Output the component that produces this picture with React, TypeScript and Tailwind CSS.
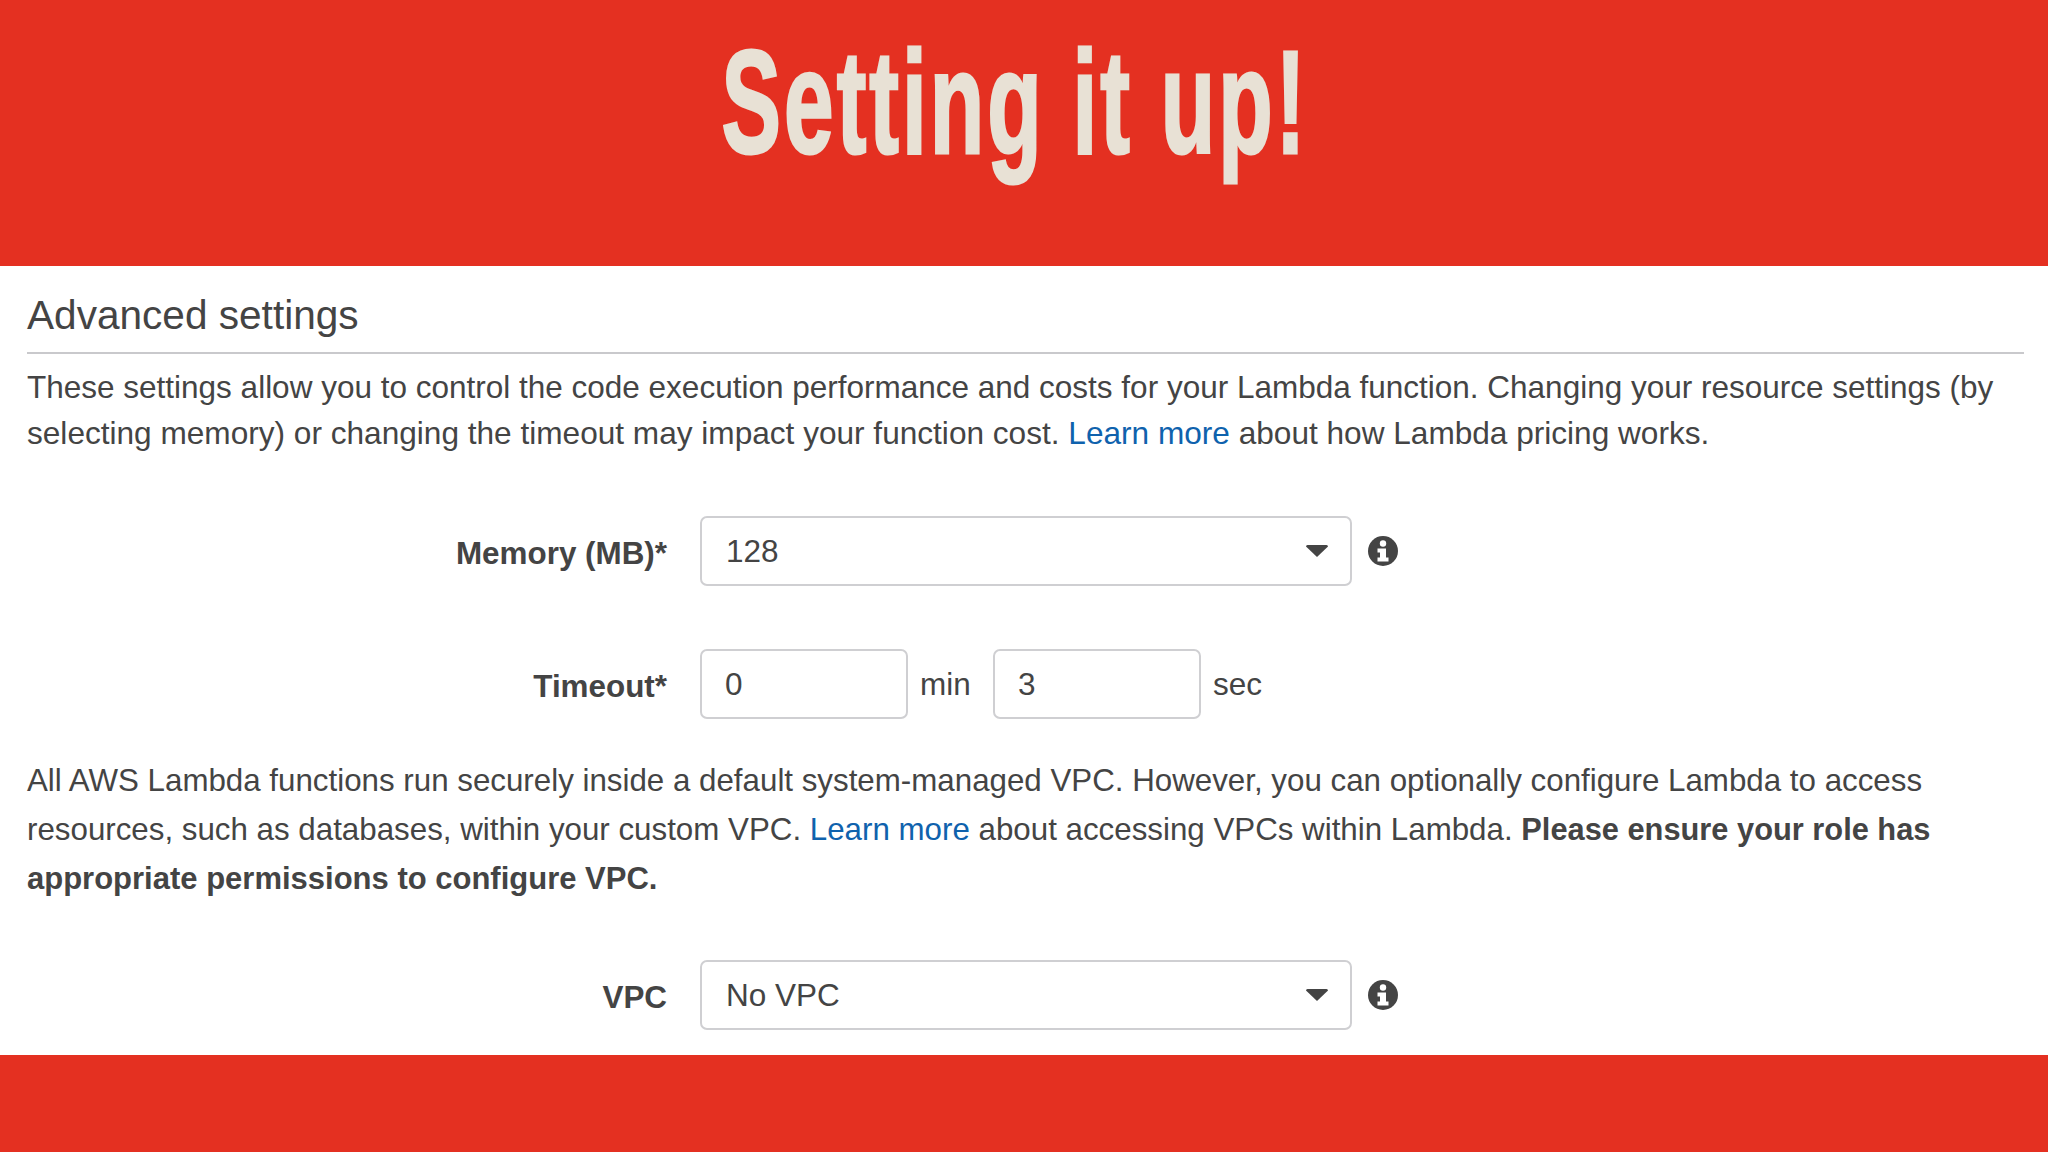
const sans = { fontFamily: '"Liberation Sans", Arial, sans-serif' };

function InfoIcon() {
  return (
    <svg viewBox="0 0 30 30" className="w-[30px] h-[30px] shrink-0 ml-[16px]">
      <circle cx="15" cy="15" r="15" fill="#444444" />
      <circle cx="15" cy="7.500" r="3.200" fill="#ffffff" />
      <path d="M9.500 12.500h8.500v9h2.500v4h-11v-4h2.500v-5h-2.500z" fill="#ffffff" />
    </svg>
  );
}

function Caret() {
  return (
    <svg viewBox="0 0 22 12" className="w-[22px] h-[12px] shrink-0">
      <path d="M0 1.500q0-1.500 1.500-1.500h19q1.500 0 1.500 1.500L11 12z" fill="#444444" />
    </svg>
  );
}

function SelectBox({ value }: { value: string }) {
  return (
    <div className="w-[652px] h-[70px] flex items-center justify-between pl-[24px] pr-[22px] bg-white border-2 border-[#cfcfd2] rounded-[7px] text-[31.500px]">
      <span className="pt-[2px]">{value}</span>
      <Caret />
    </div>
  );
}

function NumberBox({ value }: { value: string }) {
  return (
    <div className="w-[208px] h-[70px] flex items-center pl-[23px] pt-[2px] bg-white border-2 border-[#cfcfd2] rounded-[7px] text-[31.500px]">
      {value}
    </div>
  );
}

function Row({ label, children }: { label: string; children: React.ReactNode }) {
  return (
    <div className="flex items-center">
      <label className="w-[640px] text-right font-bold text-[31.400px] pt-[5px]">{label}</label>
      <div className="ml-[33px] flex items-center">{children}</div>
    </div>
  );
}

export default function App() {
  return (
    <main style={sans} className="w-[2048px] h-[1152px] flex flex-col bg-white text-[#444444] overflow-hidden">
      <header className="h-[266px] shrink-0 bg-[#e43021] flex justify-center overflow-hidden pr-[18px]">
        <h1 className="text-[#e8e1d5] font-bold text-[146px] leading-[205px] tracking-[5px] whitespace-nowrap scale-x-[0.61] [-webkit-text-stroke:3px_#e8e1d5]">
          Setting it up!
        </h1>
      </header>

      <section className="flex-1 px-[27px] pt-[24px]">
        <h2 className="text-[40.600px] leading-[50px] pb-[12px] border-b-2 border-[#c9c9cc] w-[1997px]">
          Advanced settings
        </h2>
        <p className="text-[31.500px] leading-[46px] mt-[10px] whitespace-nowrap">
          These settings allow you to control the code execution performance and costs for your Lambda function. Changing your resource settings (by
          <br />
          <span className="text-[31.600px]">
            selecting memory) or changing the timeout may impact your function cost.{' '}
            <a className="text-[#0f62ad]">Learn more</a> about how Lambda pricing works.
          </span>
        </p>

        <div className="mt-[60px]">
          <Row label="Memory (MB)*">
            <SelectBox value="128" />
            <InfoIcon />
          </Row>
        </div>

        <div className="mt-[63px]">
          <Row label="Timeout*">
            <NumberBox value="0" />
            <span className="text-[31.500px] ml-[12px] pt-[2px] w-[73px]">min</span>
            <NumberBox value="3" />
            <span className="text-[31.500px] ml-[12px] pt-[2px]">sec</span>
          </Row>
        </div>

        <p className="text-[31.300px] leading-[49px] mt-[37px] whitespace-nowrap">
          All AWS Lambda functions run securely inside a default system-managed VPC. However, you can optionally configure Lambda to access
          <br />
          resources, such as databases, within your custom VPC.{' '}
          <a className="text-[#0f62ad]">Learn more</a> about accessing VPCs within Lambda.{' '}
          <b className="text-[30.800px]">Please ensure your role has</b>
          <br />
          <b className="text-[31px]">appropriate permissions to configure VPC.</b>
        </p>

        <div className="mt-[57px]">
          <Row label="VPC">
            <SelectBox value="No VPC" />
            <InfoIcon />
          </Row>
        </div>
      </section>

      <footer className="h-[97px] shrink-0 bg-[#e43021]" />
    </main>
  );
}
